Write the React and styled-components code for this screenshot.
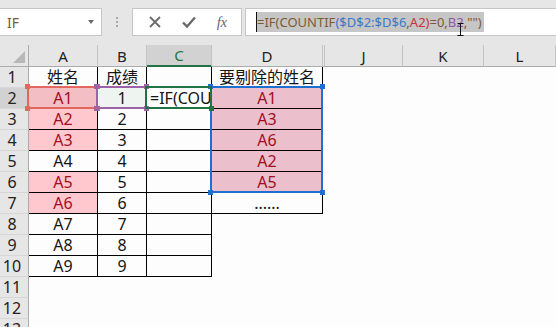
import React from 'react';
import styled, { createGlobalStyle } from 'styled-components';

const GlobalStyle = createGlobalStyle`
  html, body { margin: 0; padding: 0; background: #e6e6e6; }
  body { font-family: "Noto Sans", "Noto Sans CJK SC", sans-serif; }
`;

const Window = styled.div`
  width: 556px;
  height: 327px;
  overflow: hidden;
  background: #e6e6e6;
  display: flex;
  flex-direction: column;
`;

// ---- formula bar ----
const Toolbar = styled.div`
  height: 45px;
  flex: none;
  box-sizing: border-box;
  padding-top: 8px;
  display: flex;
  align-items: flex-start;
`;

const NameBox = styled.div`
  width: 102px;
  height: 28px;
  box-sizing: border-box;
  background: #fff;
  border: 1px solid #c6c6c6;
  border-left: none;
  display: flex;
  align-items: center;
  justify-content: space-between;
  padding: 0 7px 0 7px;
  font-size: 14px;
  color: #7d5a32;
`;

const Arrow = styled.span`
  width: 0;
  height: 0;
  border-left: 3.5px solid transparent;
  border-right: 3.5px solid transparent;
  border-top: 4px solid #6a6a6a;
`;

const Grip = styled.div`
  width: 30px;
  height: 28px;
  display: flex;
  flex-direction: column;
  align-items: center;
  justify-content: center;
  gap: 2px;
  span {
    width: 2px;
    height: 2px;
    background: #a8a8a8;
  }
`;

const ButtonGroup = styled.div`
  width: 110px;
  height: 28px;
  box-sizing: border-box;
  background: #fff;
  border: 1px solid #c6c6c6;
  display: flex;
  align-items: center;
  justify-content: space-around;
  padding: 0 4px 0 6px;
  color: #6a6a6a;
`;

const Fx = styled.span`
  font-family: "Liberation Serif", serif;
  font-style: italic;
  font-size: 15px;
  color: #6a6a6a;
  letter-spacing: -0.5px;
`;

const FormulaInput = styled.div`
  position: relative;
  flex: 1;
  margin-left: 3px;
  height: 28px;
  box-sizing: border-box;
  background: #fff;
  border: 1px solid #c6c6c6;
  border-right: none;
  display: flex;
  align-items: center;
  padding-left: 10px;
`;

const Selected = styled.span`
  background: #c6c6c6;
  border-left: 1px solid #111;
  height: 20px;
  line-height: 20px;
  padding-right: 2px;
  font-size: 13px;
  white-space: nowrap;
  color: #7d5a32;
`;

const Ref = styled.span`
  color: ${p => p.$c};
`;

const Cursor = styled.svg`
  position: absolute;
  left: 211px;
  top: 14px;
`;

// ---- sheet ----
const Sheet = styled.div`
  position: relative;
  flex: 1;
  display: grid;
  grid-template-columns: 29px 69px 49px 65px 111px 2px 78px 81px 1fr;
  grid-template-rows: 22px;
  grid-auto-rows: 21px;
  background: #fdfdfd;
  font-family: "Noto Sans", "Noto Sans CJK SC", sans-serif;
`;

const Corner = styled.div`
  position: relative;
  background: #e6e6e6;
  border-right: 1px solid #ababab;
  border-bottom: 1px solid #ababab;
  &::after {
    content: '';
    position: absolute;
    right: 3px;
    bottom: 3px;
    width: 0;
    height: 0;
    border-left: 12px solid transparent;
    border-bottom: 12px solid #b8b8b8;
  }
`;

const ColHead = styled.div`
  background: ${p => (p.$active ? '#d2d2d2' : '#e6e6e6')};
  color: ${p => (p.$active ? '#217346' : '#222')};
  border-right: 1px solid #c4c4c4;
  border-bottom: ${p => (p.$active ? '2px solid #217346' : '1px solid #ababab')};
  display: flex;
  align-items: center;
  justify-content: center;
  font-size: 15px;
  line-height: 20px;
`;

const RowHead = styled.div`
  background: ${p => (p.$active ? '#d2d2d2' : '#e6e6e6')};
  border-right: ${p => (p.$active ? '2px solid #217346' : '1px solid #ababab')};
  border-bottom: 1px solid #d6d6d6;
  color: #222;
  display: flex;
  align-items: center;
  justify-content: center;
  padding-right: ${p => (p.$active ? '3px' : '4px')};
  font-size: 16px;
  line-height: 20px;
`;

const Cell = styled.div`
  min-width: 0;
  overflow: hidden;
  white-space: nowrap;
  background: ${p => p.$fill || 'transparent'};
  color: ${p => (p.$red ? '#a30d24' : '#151515')};
  border-right: ${p => (p.$line ? '1px solid #000' : 'none')};
  border-bottom: ${p => (p.$under ? '1px solid #000' : 'none')};
  display: flex;
  align-items: center;
  justify-content: ${p => (p.$left ? 'flex-start' : 'center')};
  padding-left: ${p => (p.$left ? '3px' : '0')};
  font-size: 16px;
  line-height: 20px;
`;

const RangeBox = styled.div`
  position: absolute;
  pointer-events: none;
  box-sizing: border-box;
  left: ${p => p.$left}px;
  top: ${p => p.$top}px;
  width: ${p => p.$width}px;
  height: ${p => p.$height}px;
  border: 2px solid ${p => p.$c};
`;

const Handle = styled.span`
  position: absolute;
  width: 5px;
  height: 5px;
  background: ${p => p.$c};
  ${p => (p.$v === 'top' ? 'top: -4px;' : 'bottom: -4px;')}
  ${p => (p.$h === 'left' ? 'left: -4px;' : 'right: -4px;')}
`;

const PINK = '#ffc7ce';
const DPINK = '#ebc0cc';

const rows = [
  ['姓名', '成绩', '', '要剔除的姓名'],
  ['A1', '1', '=IF(COU', 'A1'],
  ['A2', '2', '', 'A3'],
  ['A3', '3', '', 'A6'],
  ['A4', '4', '', 'A2'],
  ['A5', '5', '', 'A5'],
  ['A6', '6', '', '......'],
  ['A7', '7', '', ''],
  ['A8', '8', '', ''],
  ['A9', '9', '', ''],
  ['', '', '', ''],
  ['', '', '', ''],
  ['', '', '', ''],
];

const pinkA = [1, 2, 3, 5, 6];

// gridline coordinates -> overlay box (sheet starts at y=45)
const range = (x1, x2, y1, y2) => ({
  $left: x1 - 1,
  $width: x2 - x1 + 2,
  $top: y1 - 1 - 45,
  $height: y2 - y1 + 2,
});

const corners = [
  ['top', 'left'],
  ['top', 'right'],
  ['bottom', 'left'],
  ['bottom', 'right'],
];

const Range = ({ c, box, only }) => (
  <RangeBox $c={c} {...box}>
    {(only || corners).map(([v, h]) => (
      <Handle key={v + h} $c={c} $v={v} $h={h} />
    ))}
  </RangeBox>
);

export default function App() {
  return (
    <Window>
      <GlobalStyle />
      <Toolbar>
        <NameBox>
          IF
          <Arrow />
        </NameBox>
        <Grip>
          <span />
          <span />
          <span />
        </Grip>
        <ButtonGroup>
          <svg width="12" height="12" viewBox="0 0 12 12">
            <path d="M1 1 L11 11 M11 1 L1 11" stroke="#6a6a6a" strokeWidth="1.8" fill="none" />
          </svg>
          <svg width="14" height="12" viewBox="0 0 14 12">
            <path d="M1 6.5 L5 10.5 L13 1.5" stroke="#6a6a6a" strokeWidth="2.4" fill="none" />
          </svg>
          <Fx>fx</Fx>
        </ButtonGroup>
        <FormulaInput>
          <Selected>
            =IF(COUNTIF<Ref $c="#3a78c8">($D$2:$D$6</Ref>,<Ref $c="#c8323a">A2)</Ref>=0,
            <Ref $c="#8a5aa6">B2</Ref>,"")
          </Selected>
          <Cursor width="7" height="13" viewBox="0 0 7 13">
            <path d="M0.5 0.5 H6.5 M3.5 0.5 V12.5 M0.5 12.5 H6.5" stroke="#111" strokeWidth="1" fill="none" />
          </Cursor>
        </FormulaInput>
      </Toolbar>

      <Sheet>
        <Corner />
        <ColHead>A</ColHead>
        <ColHead>B</ColHead>
        <ColHead $active>C</ColHead>
        <ColHead>D</ColHead>
        <ColHead />
        <ColHead>J</ColHead>
        <ColHead>K</ColHead>
        <ColHead>L</ColHead>

        {rows.map((r, i) => {
          const inTable = i < 10;
          const inD = i < 7;
          const aFill = i === 1 ? '#f3bfc5' : pinkA.includes(i) ? PINK : null;
          return (
            <React.Fragment key={i}>
              <RowHead $active={i === 1}>{i + 1}</RowHead>
              <Cell $line={inTable} $under={inTable} $fill={aFill} $red={!!aFill}>
                {r[0]}
              </Cell>
              <Cell $line={inTable} $under={inTable} $fill={i === 1 ? '#eef5f0' : null}>
                {r[1]}
              </Cell>
              <Cell $line={inTable} $under={inTable} $left>
                {r[2]}
              </Cell>
              <Cell
                $line={inD}
                $under={inD}
                $fill={i >= 1 && i <= 5 ? DPINK : null}
                $red={i >= 1 && i <= 5}
              >
                {r[3]}
              </Cell>
              <Cell />
              <Cell />
              <Cell />
              <Cell />
            </React.Fragment>
          );
        })}

        <Range c="#e2675f" box={range(28, 97, 87, 108)} />
        <Range c="#9d63a6" box={range(97, 146, 87, 108)} />
        <Range c="#1e6fd0" box={range(211, 322, 87, 192)} />
        <Range c="#217346" box={range(146, 211, 87, 108)} only={[['bottom', 'right']]} />
      </Sheet>
    </Window>
  );
}
